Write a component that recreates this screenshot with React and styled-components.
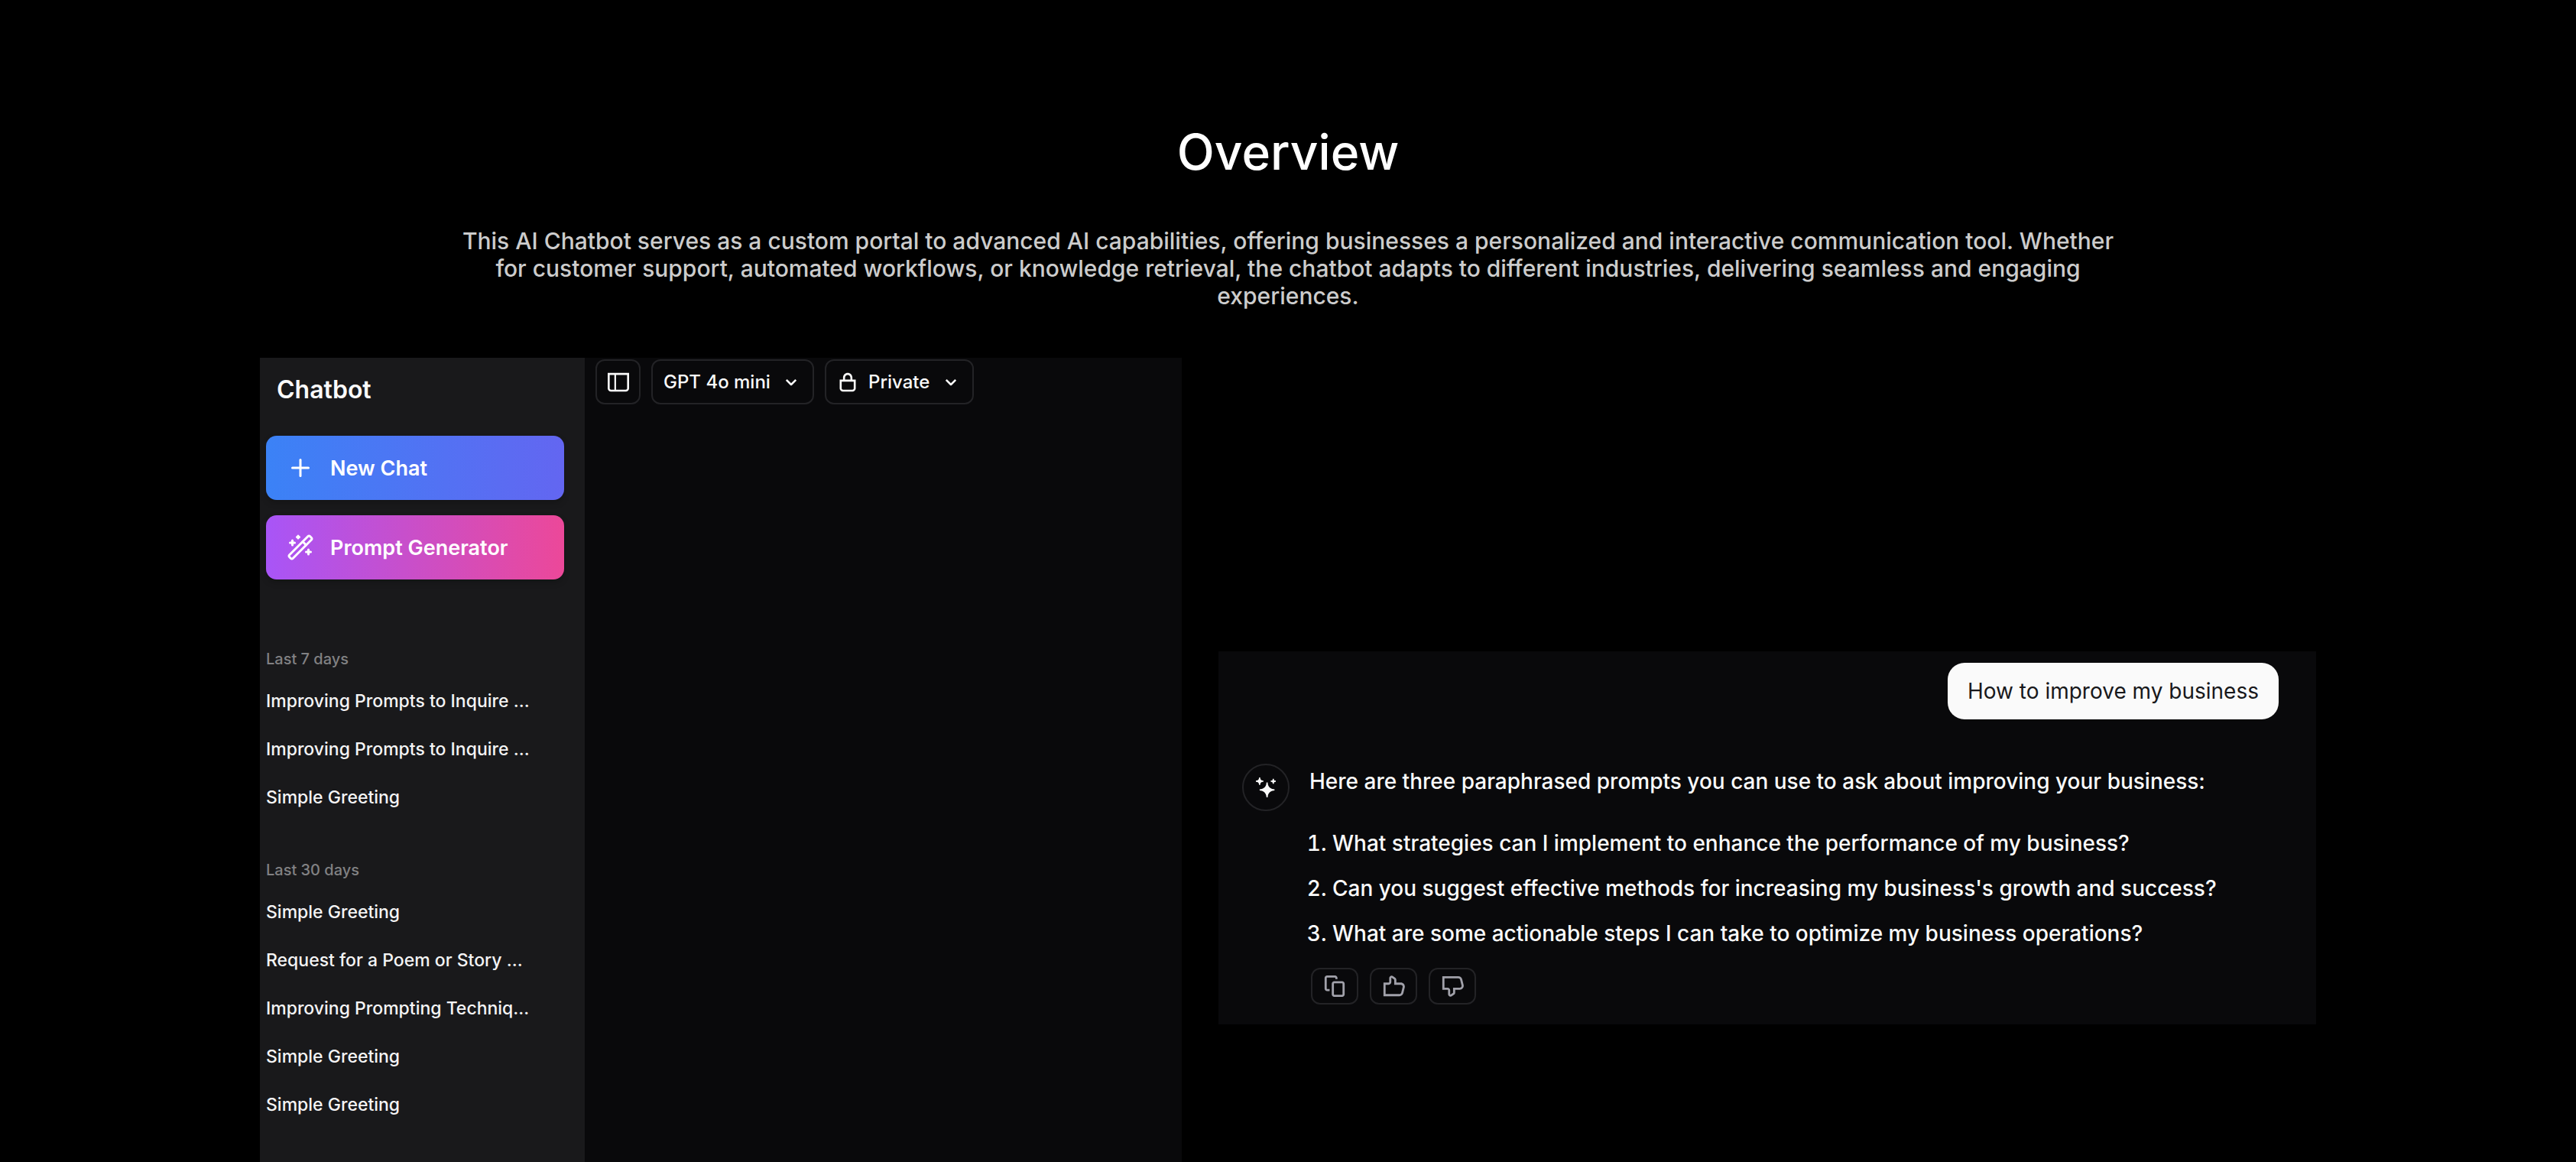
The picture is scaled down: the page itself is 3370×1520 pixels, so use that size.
import React from "react";
import styled, { createGlobalStyle } from "styled-components";
import { Plus, WandSparkles } from "lucide-react";

const GlobalStyle = createGlobalStyle`
  *, *::before, *::after { box-sizing: border-box; }
  body {
    margin: 0;
    background: #000;
    color: #fafafa;
    font-family: Inter, "Liberation Sans", sans-serif;
    font-weight: 500;
  }
  h1, h2, h3, p, ul, ol { margin: 0; padding: 0; }
  button, select { font: inherit; color: inherit; }
`;

const Section = styled.section`
  display: flex;
  flex-direction: column;
  align-items: center;
  height: 100vh;
  overflow: hidden;
  padding: 160px 340px 0;
`;

const Heading = styled.h1`
  font-size: 64px;
  line-height: 77px;
  font-weight: 500;
  color: #fff;
`;

const Lead = styled.p`
  max-width: 2200px;
  margin-top: 60px;
  font-size: 30px;
  line-height: 36px;
  text-align: center;
  color: #ccc;
`;

const Showcase = styled.div`
  display: grid;
  grid-template-columns: 1206fr 1436fr;
  align-items: center;
  gap: 48px;
  width: 100%;
  margin-top: 63px;
`;

const AppPanel = styled.div`
  display: flex;
  min-height: 1256px;
  background: #09090b;
`;

const Sidebar = styled.aside`
  flex: none;
  width: 425px;
  padding: 22px 27px 0 8px;
  background: #19191b;
`;

const Brand = styled.h2`
  padding-left: 14px;
  font-size: 32px;
  line-height: 40px;
  font-weight: 600;
`;

const SidebarActions = styled.div`
  display: grid;
  gap: 20px;
  margin: 40px 0 41px;
`;

const GradientButton = styled.button`
  display: flex;
  align-items: center;
  gap: 21px;
  height: 84px;
  padding: 0 27px;
  border: 0;
  border-radius: 14px;
  background: linear-gradient(to right, ${(p) => p.$from}, ${(p) => p.$to});
  box-shadow: 0 4px 8px rgba(0, 0, 0, 0.2);
  color: #fff;
  font-size: 27px;
  font-weight: 600;
  cursor: pointer;
`;

const Group = styled.section`
  padding-top: 51px;
`;

const GroupLabel = styled.h3`
  margin-bottom: 12px;
  font-size: 20px;
  line-height: 24px;
  font-weight: 500;
  color: #818183;
`;

const HistoryList = styled.ul`
  list-style: none;
`;

const HistoryLink = styled.a`
  display: block;
  font-size: 23px;
  line-height: 63px;
  color: #f4f4f5;
  text-decoration: none;
  white-space: nowrap;
`;

const Toolbar = styled.div`
  display: flex;
  align-items: flex-start;
  gap: 14px;
  min-width: 0;
  padding: 2px 14px;
`;

const IconButton = styled.button`
  display: flex;
  align-items: center;
  justify-content: center;
  width: ${(p) => p.$width};
  height: ${(p) => p.$height};
  padding: 0;
  border: 2px solid #232326;
  border-radius: 12px;
  background: transparent;
  color: ${(p) => p.$color};
  cursor: pointer;
`;

const SelectBox = styled.label`
  display: flex;
  align-items: center;
  gap: 13px;
  height: 59px;
  padding: 0 14px;
  border: 2px solid #232326;
  border-radius: 12px;
`;

const Select = styled.select`
  appearance: none;
  padding: 0;
  border: 0;
  outline: 0;
  background: transparent;
  font-size: 24px;
`;

const ChatPanel = styled.div`
  display: flex;
  flex-direction: column;
  padding: 15px 49px 26px 31px;
  background: #09090b;
`;

const UserMessage = styled.p`
  align-self: flex-end;
  padding: 15px 26px;
  border-radius: 22px;
  background: #fafafa;
  color: #18181b;
  font-size: 28px;
  line-height: 44px;
  font-weight: 400;
`;

const Reply = styled.div`
  display: flex;
  align-items: flex-start;
  gap: 26px;
  margin-top: 58px;
`;

const Avatar = styled.div`
  display: flex;
  flex: none;
  align-items: center;
  justify-content: center;
  width: 62px;
  height: 62px;
  border: 2px solid #232326;
  border-radius: 50%;
`;

const ReplyBody = styled.div`
  flex: 1;
  min-width: 0;
  font-size: 28px;
`;

const ReplyText = styled.p`
  line-height: 46px;
`;

const PromptList = styled.ol`
  margin-top: 29px;
  padding-left: 30px;
  line-height: 59px;
`;

const ReplyActions = styled.div`
  display: flex;
  gap: 15px;
  margin-top: 15px;
  padding-left: 2px;
`;

const icons = {
  sidebar:
    "M6.245 2.5H14.5V12.5C14.5 13.0523 14.0523 13.5 13.5 13.5H6.245V2.5ZM4.995 2.5H1.5V12.5C1.5 13.0523 1.94772 13.5 2.5 13.5H4.995V2.5ZM0 1H1.5H14.5H16V2.5V12.5C16 13.8807 14.8807 15 13.5 15H2.5C1.11929 15 0 13.8807 0 12.5V2.5V1Z",
  lock: "M10 4.5V6H6V4.5C6 3.39543 6.89543 2.5 8 2.5C9.10457 2.5 10 3.39543 10 4.5ZM4.5 6V4.5C4.5 2.567 6.067 1 8 1C9.933 1 11.5 2.567 11.5 4.5V6H12.5H14V7.5V12.5C14 13.8807 12.8807 15 11.5 15H4.5C3.11929 15 2 13.8807 2 12.5V7.5V6H3.5H4.5ZM11.5 7.5H10H6H4.5H3.5V12.5C3.5 13.0523 3.94772 13.5 4.5 13.5H11.5C12.0523 13.5 12.5 13.0523 12.5 12.5V7.5H11.5Z",
  chevron:
    "M12.0607 6.74999L11.5303 7.28032L8.7071 10.1035C8.31657 10.4941 7.68341 10.4941 7.29288 10.1035L4.46966 7.28032L3.93933 6.74999L4.99999 5.68933L5.53032 6.21966L7.99999 8.68933L10.4697 6.21966L11 5.68933L12.0607 6.74999Z",
  sparkles:
    "M2.5 0.5V0H3.5V0.5C3.5 1.60457 4.39543 2.5 5.5 2.5H6V3V3.5H5.5C4.39543 3.5 3.5 4.39543 3.5 5.5V6H3H2.5V5.5C2.5 4.39543 1.60457 3.5 0.5 3.5H0V3V2.5H0.5C1.60457 2.5 2.5 1.60457 2.5 0.5Z M14.5 4.5V5H13.5V4.5C13.5 3.94772 13.0523 3.5 12.5 3.5H12V3V2.5H12.5C13.0523 2.5 13.5 2.05228 13.5 1.5V1H14H14.5V1.5C14.5 2.05228 14.9477 2.5 15.5 2.5H16V3V3.5H15.5C14.9477 3.5 14.5 3.94772 14.5 4.5Z M8.40706 4.92939L8.5 4H9.5L9.59294 4.92939C9.82973 7.29734 11.7027 9.17027 14.0706 9.40706L15 9.5V10.5L14.0706 10.5929C11.7027 10.8297 9.82973 12.7027 9.59294 15.0706L9.5 16H8.5L8.40706 15.0706C8.17027 12.7027 6.29734 10.8297 3.92939 10.5929L3 10.5V9.5L3.92939 9.40706C6.29734 9.17027 8.17027 7.29734 8.40706 4.92939Z",
  copy: "M2.75 0.5C1.7835 0.5 1 1.2835 1 2.25V9.75C1 10.7165 1.7835 11.5 2.75 11.5H3.75H4.5V10H3.75H2.75C2.61193 10 2.5 9.88807 2.5 9.75V2.25C2.5 2.11193 2.61193 2 2.75 2H8.25C8.38807 2 8.5 2.11193 8.5 2.25V3H10V2.25C10 1.2835 9.2165 0.5 8.25 0.5H2.75ZM7.75 4.5C6.7835 4.5 6 5.2835 6 6.25V13.75C6 14.7165 6.7835 15.5 7.75 15.5H13.25C14.2165 15.5 15 14.7165 15 13.75V6.25C15 5.2835 14.2165 4.5 13.25 4.5H7.75ZM7.5 6.25C7.5 6.11193 7.61193 6 7.75 6H13.25C13.3881 6 13.5 6.11193 13.5 6.25V13.75C13.5 13.8881 13.3881 14 13.25 14H7.75C7.61193 14 7.5 13.8881 7.5 13.75V6.25Z",
  thumbUp:
    "M6.89531 2.23972C6.72984 2.12153 6.5 2.23981 6.5 2.44315V5.25001C6.5 6.21651 5.7165 7.00001 4.75 7.00001H2.5V13.5H12.1884C12.762 13.5 13.262 13.1096 13.4011 12.5532L14.4011 8.55318C14.5984 7.76425 14.0017 7.00001 13.1884 7.00001H9.25H8.5V6.25001V3.51458C8.5 3.43384 8.46101 3.35807 8.39531 3.31114L6.89531 2.23972ZM5 2.44315C5 1.01975 6.6089 0.191779 7.76717 1.01912L9.26717 2.09054C9.72706 2.41904 10 2.94941 10 3.51458V5.50001H13.1884C14.9775 5.50001 16.2903 7.18133 15.8563 8.91698L14.8563 12.917C14.5503 14.1412 13.4503 15 12.1884 15H1.75H1V14.25V6.25001V5.50001H1.75H4.75C4.88807 5.50001 5 5.38808 5 5.25001V2.44315Z",
  thumbDown:
    "M6.89531 13.7603C6.72984 13.8785 6.5 13.7602 6.5 13.5569V10.75C6.5 9.7835 5.7165 9 4.75 9H2.5V2.5H12.1884C12.762 2.5 13.262 2.89037 13.4011 3.44683L14.4011 7.44683C14.5984 8.23576 14.0017 9 13.1884 9H9.25H8.5V9.75V12.4854C8.5 12.5662 8.46101 12.6419 8.39531 12.6889L6.89531 13.7603ZM5 13.5569C5 14.9803 6.6089 15.8082 7.76717 14.9809L9.26717 13.9095C9.72706 13.581 10 13.0506 10 12.4854V10.5H13.1884C14.9775 10.5 16.2903 8.81868 15.8563 7.08303L14.8563 3.08303C14.5503 1.85882 13.4503 1 12.1884 1H1.75H1V1.75V9.75V10.5H1.75H4.75C4.88807 10.5 5 10.6119 5 10.75V13.5569Z",
};

function Icon({ name, size = 28 }) {
  return (
    <svg width={size} height={size} viewBox="0 0 16 16" fill="currentColor" aria-hidden="true">
      <path fillRule="evenodd" clipRule="evenodd" d={icons[name]} />
    </svg>
  );
}

const history = [
  {
    label: "Last 7 days",
    chats: ["Improving Prompts to Inquire …", "Improving Prompts to Inquire …", "Simple Greeting"],
  },
  {
    label: "Last 30 days",
    chats: [
      "Simple Greeting",
      "Request for a Poem or Story …",
      "Improving Prompting Techniq…",
      "Simple Greeting",
      "Simple Greeting",
    ],
  },
];

const prompts = [
  "What strategies can I implement to enhance the performance of my business?",
  "Can you suggest effective methods for increasing my business's growth and success?",
  "What are some actionable steps I can take to optimize my business operations?",
];

const replyActions = [
  { icon: "copy", label: "Copy" },
  { icon: "thumbUp", label: "Upvote response" },
  { icon: "thumbDown", label: "Downvote response" },
];

export default function App() {
  return (
    <>
      <GlobalStyle />
      <Section>
        <Heading>Overview</Heading>
        <Lead>
          This AI Chatbot serves as a custom portal to advanced AI capabilities, offering businesses a
          personalized and interactive communication tool. Whether for customer support, automated
          workflows, or knowledge retrieval, the chatbot adapts to different industries, delivering
          seamless and engaging experiences.
        </Lead>
        <Showcase>
          <AppPanel>
            <Sidebar>
              <Brand>Chatbot</Brand>
              <SidebarActions>
                <GradientButton type="button" $from="#3b82f6" $to="#6366f1">
                  <Plus size={36} />
                  New Chat
                </GradientButton>
                <GradientButton type="button" $from="#a855f7" $to="#ec4899">
                  <WandSparkles size={36} />
                  Prompt Generator
                </GradientButton>
              </SidebarActions>
              {history.map((group) => (
                <Group key={group.label}>
                  <GroupLabel>{group.label}</GroupLabel>
                  <HistoryList>
                    {group.chats.map((chat, i) => (
                      <li key={i}>
                        <HistoryLink href="#">{chat}</HistoryLink>
                      </li>
                    ))}
                  </HistoryList>
                </Group>
              ))}
            </Sidebar>
            <Toolbar>
              <IconButton type="button" aria-label="Toggle sidebar" $width="59px" $height="59px" $color="#fafafa">
                <Icon name="sidebar" />
              </IconButton>
              <SelectBox>
                <Select aria-label="Model">
                  <option>GPT 4o mini</option>
                </Select>
                <Icon name="chevron" />
              </SelectBox>
              <SelectBox>
                <Icon name="lock" />
                <Select aria-label="Visibility">
                  <option>Private</option>
                </Select>
                <Icon name="chevron" />
              </SelectBox>
            </Toolbar>
          </AppPanel>
          <ChatPanel>
            <UserMessage>How to improve my business</UserMessage>
            <Reply>
              <Avatar>
                <Icon name="sparkles" size={26} />
              </Avatar>
              <ReplyBody>
                <ReplyText>
                  Here are three paraphrased prompts you can use to ask about improving your business:
                </ReplyText>
                <PromptList>
                  {prompts.map((prompt) => (
                    <li key={prompt}>{prompt}</li>
                  ))}
                </PromptList>
                <ReplyActions>
                  {replyActions.map(({ icon, label }) => (
                    <IconButton key={icon} type="button" aria-label={label} $width="62px" $height="48px" $color="#a1a1aa">
                      <Icon name={icon} size={30} />
                    </IconButton>
                  ))}
                </ReplyActions>
              </ReplyBody>
            </Reply>
          </ChatPanel>
        </Showcase>
      </Section>
    </>
  );
}
